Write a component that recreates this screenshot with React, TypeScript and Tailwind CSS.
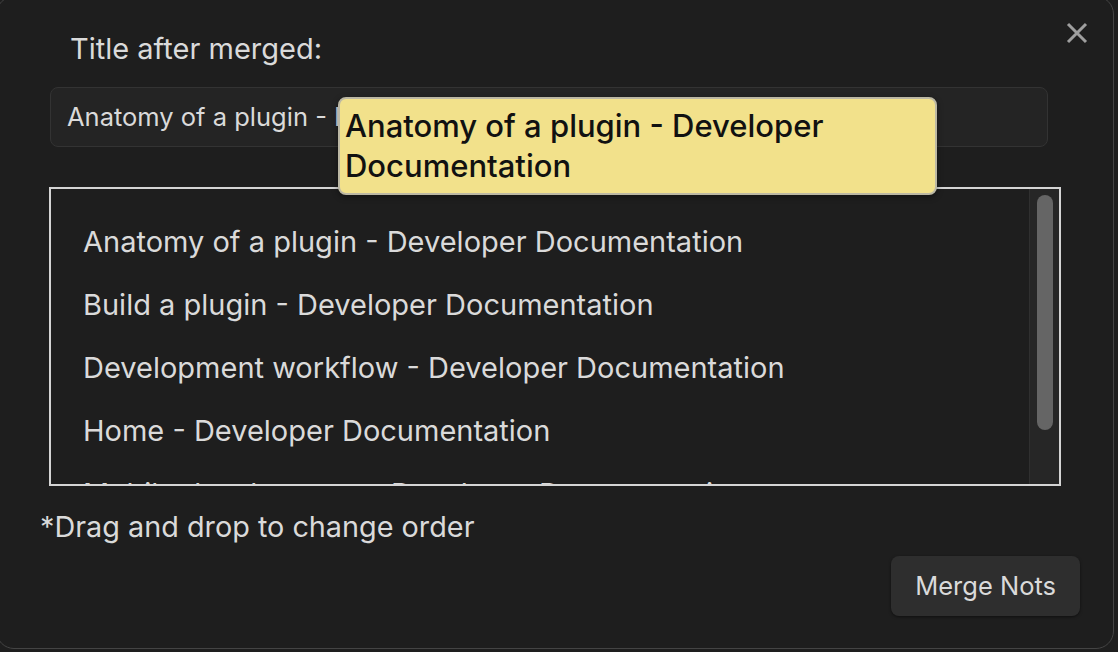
import React from 'react';

const notes = [
  'Anatomy of a plugin - Developer Documentation',
  'Build a plugin - Developer Documentation',
  'Development workflow - Developer Documentation',
  'Home - Developer Documentation',
  'Mobile development - Developer Documentation',
  'Plugin guidelines - Developer Documentation',
];

export default function App() {
  return (
    <div className="w-[1118px] h-[652px] overflow-hidden bg-[#1e1e1e] font-['Inter','Noto_Sans',sans-serif] text-[#dadada]">
      <div className="relative -ml-[4px] -mt-[4px] w-[1118px] h-[653px] rounded-[18px] border border-[#444444] bg-[#1e1e1e]">
        {/* Close */}
        <button className="absolute top-[25px] right-[25px] text-[#9f9f9f]">
          <svg width="22" height="22" viewBox="0 0 22 22" fill="none" stroke="currentColor" strokeWidth="3">
            <path d="M2 2L20 20M20 2L2 20" />
          </svg>
        </button>

        <div className="flex flex-col pt-[34px] pl-[43px]">
          <div className="ml-[30px] h-[36px] leading-[36px] text-[29px]">Title after merged:</div>

          <div className="mt-[20px] ml-[10px] w-[998px] h-[60px] rounded-[8px] border border-[#333333] bg-[#242424] flex items-center pl-[16px] text-[25.5px] whitespace-nowrap overflow-hidden">
            Anatomy of a plugin - Developer Documentation
          </div>

          <div className="mt-[40px] ml-[9px] w-[1012px] h-[299px] border-2 border-[#d4d4d4] flex overflow-hidden">
            <div className="flex-1 overflow-hidden pt-[21px] pl-[32px]">
              {notes.map(n => (
                <div key={n} className="h-[63px] leading-[63px] text-[29px] whitespace-nowrap">
                  {n}
                </div>
              ))}
            </div>
            <div className="w-[30px] h-full bg-[#262626] border-l border-[#303030] flex justify-center pt-[6px]">
              <div className="w-[16px] h-[235px] rounded-full bg-[#656565]" />
            </div>
          </div>

          <div className="mt-[23px] h-[36px] leading-[36px] text-[28.8px]">*Drag and drop to change order</div>

          <div className="mt-[11px] flex justify-end pr-[33px]">
            <button className="h-[60px] px-[24px] rounded-[8px] bg-[#2e2e2e] text-[25.5px] text-[#dadada] shadow-[0_1px_3px_rgba(0,0,0,0.5)]">
              Merge Nots
            </button>
          </div>
        </div>

        {/* Tooltip */}
        <div className="absolute left-[341px] top-[100px] w-[599px] rounded-[8px] border-2 border-[#bcb8a4] bg-[#f2e18b] pl-[5px] pt-[7px] pb-[7px] text-[31px] leading-[40px] font-medium text-[#111111] shadow-[0_2px_6px_rgba(0,0,0,0.4)]">
          Anatomy of a plugin - Developer Documentation
        </div>
      </div>
    </div>
  );
}
